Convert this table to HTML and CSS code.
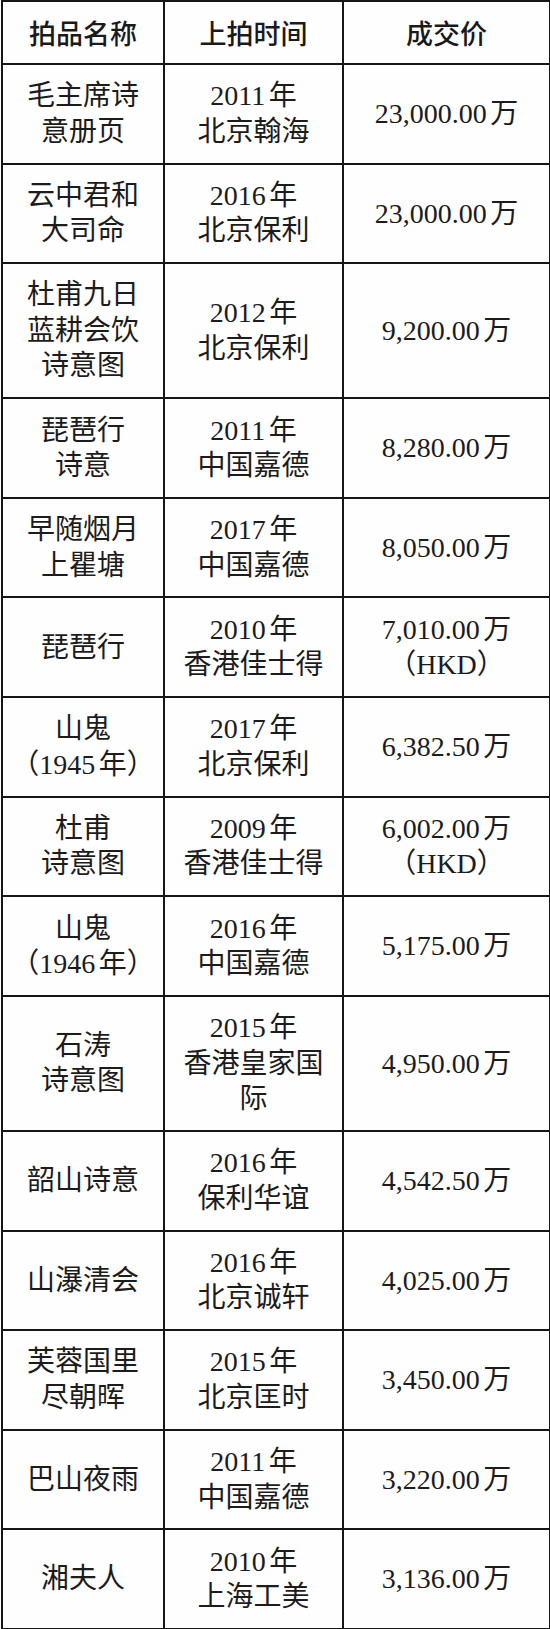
FILE: index.html
```html
<!DOCTYPE html>
<html lang="zh-CN">
<head>
<meta charset="utf-8">
<title>拍卖成交记录</title>
<link rel="stylesheet" href="styles.css">
</head>
<body>
<table class="sales">
  <colgroup>
    <col class="c-name">
    <col class="c-time">
    <col class="c-price">
  </colgroup>
  <thead>
    <tr><th>拍品名称</th><th>上拍时间</th><th>成交价</th></tr>
  </thead>
  <tbody>
    <tr><td>毛主席诗<br>意册页</td><td>2011年<br>北京翰海</td><td>23,000.00万</td></tr>
    <tr><td>云中君和<br>大司命</td><td>2016年<br>北京保利</td><td>23,000.00万</td></tr>
    <tr><td>杜甫九日<br>蓝耕会饮<br>诗意图</td><td>2012年<br>北京保利</td><td>9,200.00万</td></tr>
    <tr><td>琵琶行<br>诗意</td><td>2011年<br>中国嘉德</td><td>8,280.00万</td></tr>
    <tr><td>早随烟月<br>上瞿塘</td><td>2017年<br>中国嘉德</td><td>8,050.00万</td></tr>
    <tr><td>琵琶行</td><td>2010年<br>香港佳士得</td><td>7,010.00万<br>（HKD）</td></tr>
    <tr><td>山鬼<br>（1945年）</td><td>2017年<br>北京保利</td><td>6,382.50万</td></tr>
    <tr><td>杜甫<br>诗意图</td><td>2009年<br>香港佳士得</td><td>6,002.00万<br>（HKD）</td></tr>
    <tr><td>山鬼<br>（1946年）</td><td>2016年<br>中国嘉德</td><td>5,175.00万</td></tr>
    <tr><td>石涛<br>诗意图</td><td>2015年<br>香港皇家国<br>际</td><td>4,950.00万</td></tr>
    <tr><td>韶山诗意</td><td>2016年<br>保利华谊</td><td>4,542.50万</td></tr>
    <tr><td>山瀑清会</td><td>2016年<br>北京诚轩</td><td>4,025.00万</td></tr>
    <tr><td>芙蓉国里<br>尽朝晖</td><td>2015年<br>北京匡时</td><td>3,450.00万</td></tr>
    <tr><td>巴山夜雨</td><td>2011年<br>中国嘉德</td><td>3,220.00万</td></tr>
    <tr><td>湘夫人</td><td>2010年<br>上海工美</td><td>3,136.00万</td></tr>
  </tbody>
</table>
</body>
</html>
```

FILE: styles.css
```css
html, body {
  margin: 0;
  padding: 0;
  background: #fefefe;
}

.sales {
  border-collapse: collapse;
  width: 548px;
  margin: 0 0 0 1px;
  table-layout: fixed;
  color: #1c1c1c;
  font-family: "Liberation Serif", "Noto Sans CJK SC", serif;
  font-size: 28px;
  line-height: 35.5px;
  text-autospace: normal;
}

.c-name { width: 162px; }
.c-time { width: 179px; }
.c-price { width: 207px; }

.sales th,
.sales td {
  border: 2px solid #161616;
  text-align: center;
  vertical-align: middle;
  padding: 13.3px 0;
}

.sales th {
  font-family: "Noto Sans CJK SC", sans-serif;
  font-weight: 500;
  font-size: 27px;
  line-height: 35px;
  padding: 13px 0;
  color: #1a1a1a;
}
```
